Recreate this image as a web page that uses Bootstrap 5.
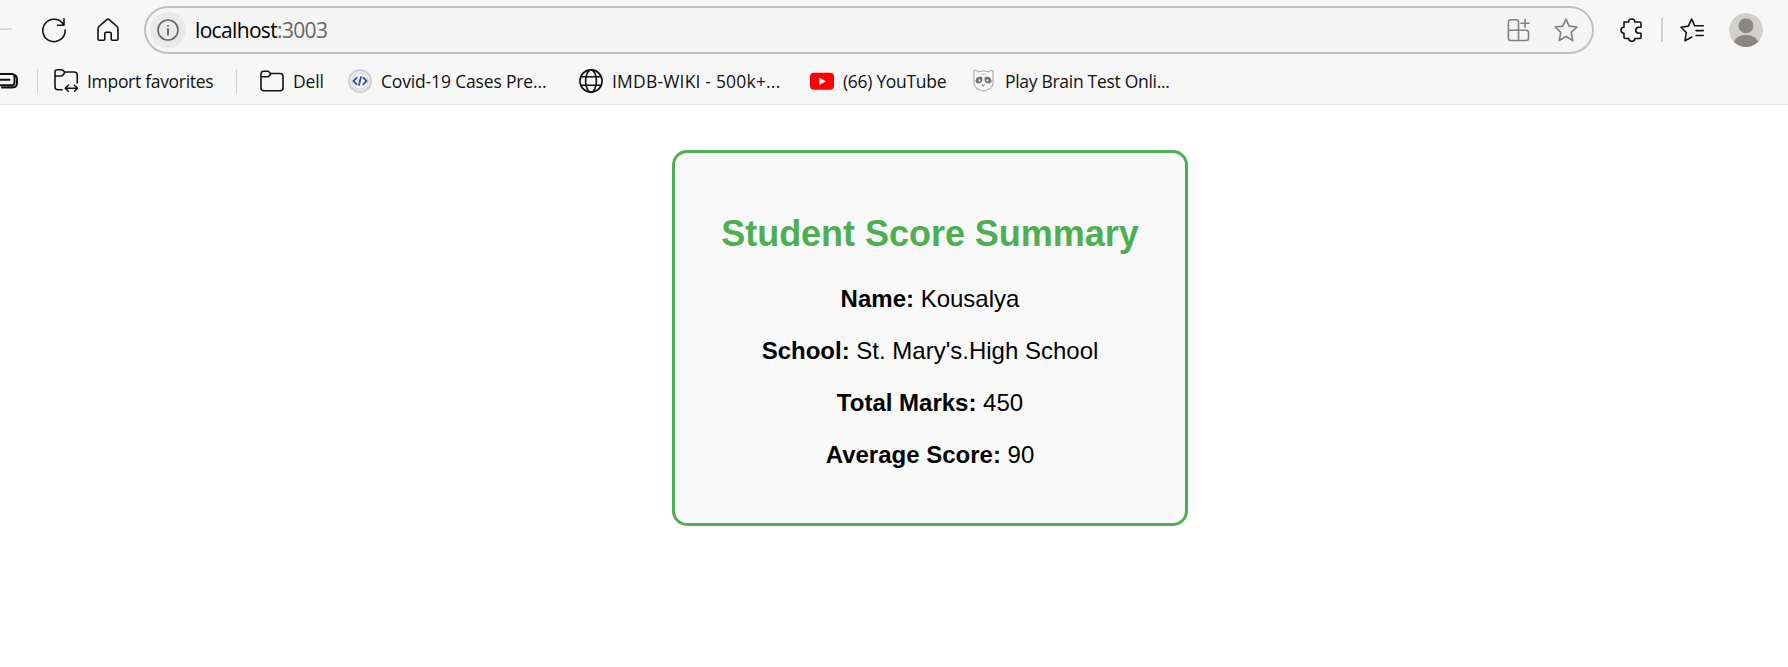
<!DOCTYPE html>
<html lang="en">
<head>
<meta charset="utf-8">
<meta name="viewport" content="width=device-width, initial-scale=1">
<title>Student Score Summary</title>
<link href="https://cdn.jsdelivr.net/npm/bootstrap@5.3.0/dist/css/bootstrap.min.css" rel="stylesheet">
<style>
body{background:#fff;color:#000;overflow:hidden}
svg{display:block;flex:none;fill:none;stroke:#111;stroke-width:1.6;stroke-linejoin:round;stroke-linecap:round;overflow:visible}
.chrome{height:105px;background:#f7f7f7;border-bottom:1px solid #e5e5e5;font-family:"Open Sans","Noto Sans",sans-serif;white-space:nowrap}
.toolbar-row{display:grid;grid-template-columns:42px 54px 48px 1450px 26px 41px 19px 49px 34px;height:60px;align-items:center}
.address{height:48px;border:2px solid #c0c0c0;border-radius:24px;background:#f5f5f5;padding:0 14px 0 4px}
.site-info{width:36px;height:36px;background:#e9e9e9}
.site-info svg{stroke:#666}
.url{font-size:21px;line-height:30px;margin-left:9px;letter-spacing:-.66px}
.url span{color:#666}
.dim{stroke:#808080}
.rule{width:2px;height:24px;background:#d0d0d0}
.bookmarks{display:grid;grid-template-columns:37px 17px 182px 24px 88px 231px 231px 162px 220px;height:42px;align-items:center}
.bookmarks .rule{width:1px}
.bookmarks a{color:#111;text-decoration:none;font-size:17.5px;line-height:24px;display:flex;align-items:center;gap:9px}
.bookmarks a span{margin-bottom:1px;letter-spacing:-.3px}
.bookmarks .loose{letter-spacing:-.16px}
.bookmarks .wide{letter-spacing:.19px}
.score{width:516px;height:376px;margin:45px auto 0 672px;padding:30px 0;border:3px solid #4caf50;border-radius:15px;background:#f9f9f9;font-family:"Liberation Sans",Arial,sans-serif;text-align:center}
.score h2{font-size:36px;line-height:41px;font-weight:700;color:#4caf50;margin:30px 0 31px;letter-spacing:-.03px}
.score p{font-size:24px;line-height:28px;margin:0 0 24px}
.score strong{font-weight:700}
</style>
</head>
<body>
<header class="chrome">
  <div class="toolbar-row">
    <svg width="12" height="24"><path d="M0 11.2H11.5" stroke="#c8c8c8" stroke-width="1.3"/></svg>
    <svg width="24" height="24"><path d="M21.8 7A11.2 11.2 0 1 0 23.2 12M22 .8V7.2H15.6"/></svg>
    <svg width="24" height="24"><path d="M2 10.5Q2 9.4 3 8.5L10.8 1.6Q12 .6 13.2 1.6L21 8.5Q22 9.4 22 10.5V21Q22 22.3 20.7 22.3H16.4Q15.2 22.3 15.2 21V15.5Q15.2 14.2 13.9 14.2H10.1Q8.8 14.2 8.8 15.5V21Q8.8 22.3 7.6 22.3H3.3Q2 22.3 2 21Z"/></svg>
    <div class="address d-flex align-items-center">
      <div class="site-info rounded-circle d-flex align-items-center justify-content-center">
        <svg width="22" height="22"><circle cx="11" cy="11" r="10"/><path d="M11 10V15.5M11 6.6V6.8" stroke-width="1.9"/></svg>
      </div>
      <div class="url">localhost<span>:3003</span></div>
      <div class="d-flex align-items-center gap-4 ms-auto">
        <svg class="dim" width="23" height="24"><path d="M11.5 22.5V4Q11.5 1.8 9.3 1.8H3.6Q1.4 1.8 1.4 4V20.3Q1.4 22.5 3.6 22.5H19.3Q21.5 22.5 21.5 20.3V14.6Q21.5 12.2 19.3 12.2H1.4M18 1.3V9.3M14 5.3H22"/></svg>
        <svg class="dim" width="24" height="24"><path d="M12 1L15.2 8.1L23 9L17.2 14.4L18.8 22.5L12 18.5L5.2 22.5L6.8 14.4L1 9L8.8 8.1Z"/></svg>
      </div>
    </div>
    <svg style="grid-column:6" width="23" height="24"><path d="M4 4H8.7Q8.4 1 11.7 1T14.7 4H19.5Q21 4 21 5.5V9.3H18.8Q15.7 9.5 15.7 12.3T18.8 15.3H21V19.2Q21 20.5 19.5 20.5H14.8Q14.8 23.3 11.8 23.3T8.7 20.5H5.3Q4 20.5 4 19.2V15.3Q1 15.2 1 12.3T4 9.3Z"/></svg>
    <div class="rule"></div>
    <svg width="24" height="24"><path d="M14.6 7.8L11.7 1L8.4 8.1L1 9.2L6.3 14.5L5 22.8L11.8 19M14.6 7.8H23.3M16 12.6H23.3M16 17.5H23.3"/></svg>
    <svg width="34" height="34" viewBox="0 0 34 34" style="stroke:none"><defs><clipPath id="avatar"><circle cx="17" cy="17" r="17"/></clipPath></defs><g clip-path="url(#avatar)"><circle cx="17" cy="17" r="17" fill="#d2d0cd"/><circle cx="17" cy="12.7" r="7.4" fill="#8a8683"/><ellipse cx="17" cy="31" rx="12.5" ry="9.3" fill="#8a8683"/></g></svg>
  </div>
  <nav class="bookmarks">
    <svg width="18" height="24"><path d="M0 5H12Q14.5 5 14.5 8V13Q14.5 16.2 12 16.2H0M0 10.8H9.5M2 18.5H12.5Q17 18.2 17 14V10Q17 7.2 15 6.2" stroke-width="2"/></svg>
    <div class="rule"></div>
    <a href="#"><svg width="24" height="24"><path d="M8 20.8H4Q1 20.8 1 17.8V3Q1 .8 3.5 .8H7.5Q8.8.8 10.6 3H20Q23.2 3 23.2 6.2V14M1 7H7Q8.2 7 9 6L11 3M11.5 19.2H23.2M14.3 16.2L11.3 19.2L14.3 22.2M20.5 16.2L23.5 19.2L20.5 22.2"/></svg><span>Import favorites</span></a>
    <div class="rule"></div>
    <a href="#"><svg width="24" height="24"><path d="M1 5Q1 2.2 3.7 2.2H8L10.8 4.5H20Q23 4.5 23 7.5V18.8Q23 21.8 20 21.8H4Q1 21.8 1 18.8ZM1 7.8H7.5Q8.7 7.8 9.5 6.5L10.8 4.5"/></svg><span class="loose">Dell</span></a>
    <a href="#"><svg width="24" height="24"><circle cx="12" cy="12" r="11" fill="#ececec" stroke="#d0d0d0" stroke-width="2"/><circle cx="12" cy="12" r="8" fill="#f5f5f5" stroke="#c9c9c9" stroke-width=".7"/><path d="M8.7 8.7L5.5 12L8.7 15.3M15.3 8.7L18.5 12L15.3 15.3M13 8L11 16" stroke="#2f54a3" stroke-width="1.8"/></svg><span class="loose">Covid-19 Cases Pre...</span></a>
    <a href="#"><svg width="24" height="24"><circle cx="12" cy="12" r="11.1"/><ellipse cx="12" cy="12" rx="5.4" ry="11.1"/><path d="M1.8 7.8H22.2M1.8 16.2H22.2"/></svg><span class="wide">IMDB-WIKI - 500k+...</span></a>
    <a href="#"><svg width="24" height="24" style="stroke:none"><rect y="3.7" width="24" height="17" rx="4" fill="#f00"/><path d="M9.5 8.5L15.8 12.2L9.5 15.9Z" fill="#fff"/></svg><span>(66) YouTube</span></a>
    <a href="#"><svg width="24" height="24"><path d="M2 2Q4 .5 6 3Q11.5 1 17 3Q19 .5 21 2V15Q20 20 11.5 22Q3 20 2 15Z" fill="#fff" stroke="#aaa" stroke-width="1.2"/><path d="M4 12Q5 7.5 9.5 8.5Q10.8 12 8 13.5Q5 14.5 4 12M19 12Q18 7.5 13.5 8.5Q12.2 12 15 13.5Q18 14.5 19 12" fill="#777" stroke="#666" stroke-width="1.2"/><path d="M7.5 11.3V11.4M15.5 11.3V11.4" stroke="#fff" stroke-width="2"/><path d="M10.5 16H12.5L11.5 17Z" stroke="#777" stroke-width="1"/><path d="M9 5.2H14" stroke="#bbb" stroke-width="1"/></svg><span>Play Brain Test Onli...</span></a>
  </nav>
</header>
<main class="score">
  <h2>Student Score Summary</h2>
  <p><strong>Name:</strong> Kousalya</p>
  <p><strong>School:</strong> St. Mary's.High School</p>
  <p><strong>Total Marks:</strong> 450</p>
  <p><strong>Average Score:</strong> 90</p>
</main>
<script src="https://cdn.jsdelivr.net/npm/bootstrap@5.3.0/dist/js/bootstrap.bundle.min.js"></script>
</body>
</html>
